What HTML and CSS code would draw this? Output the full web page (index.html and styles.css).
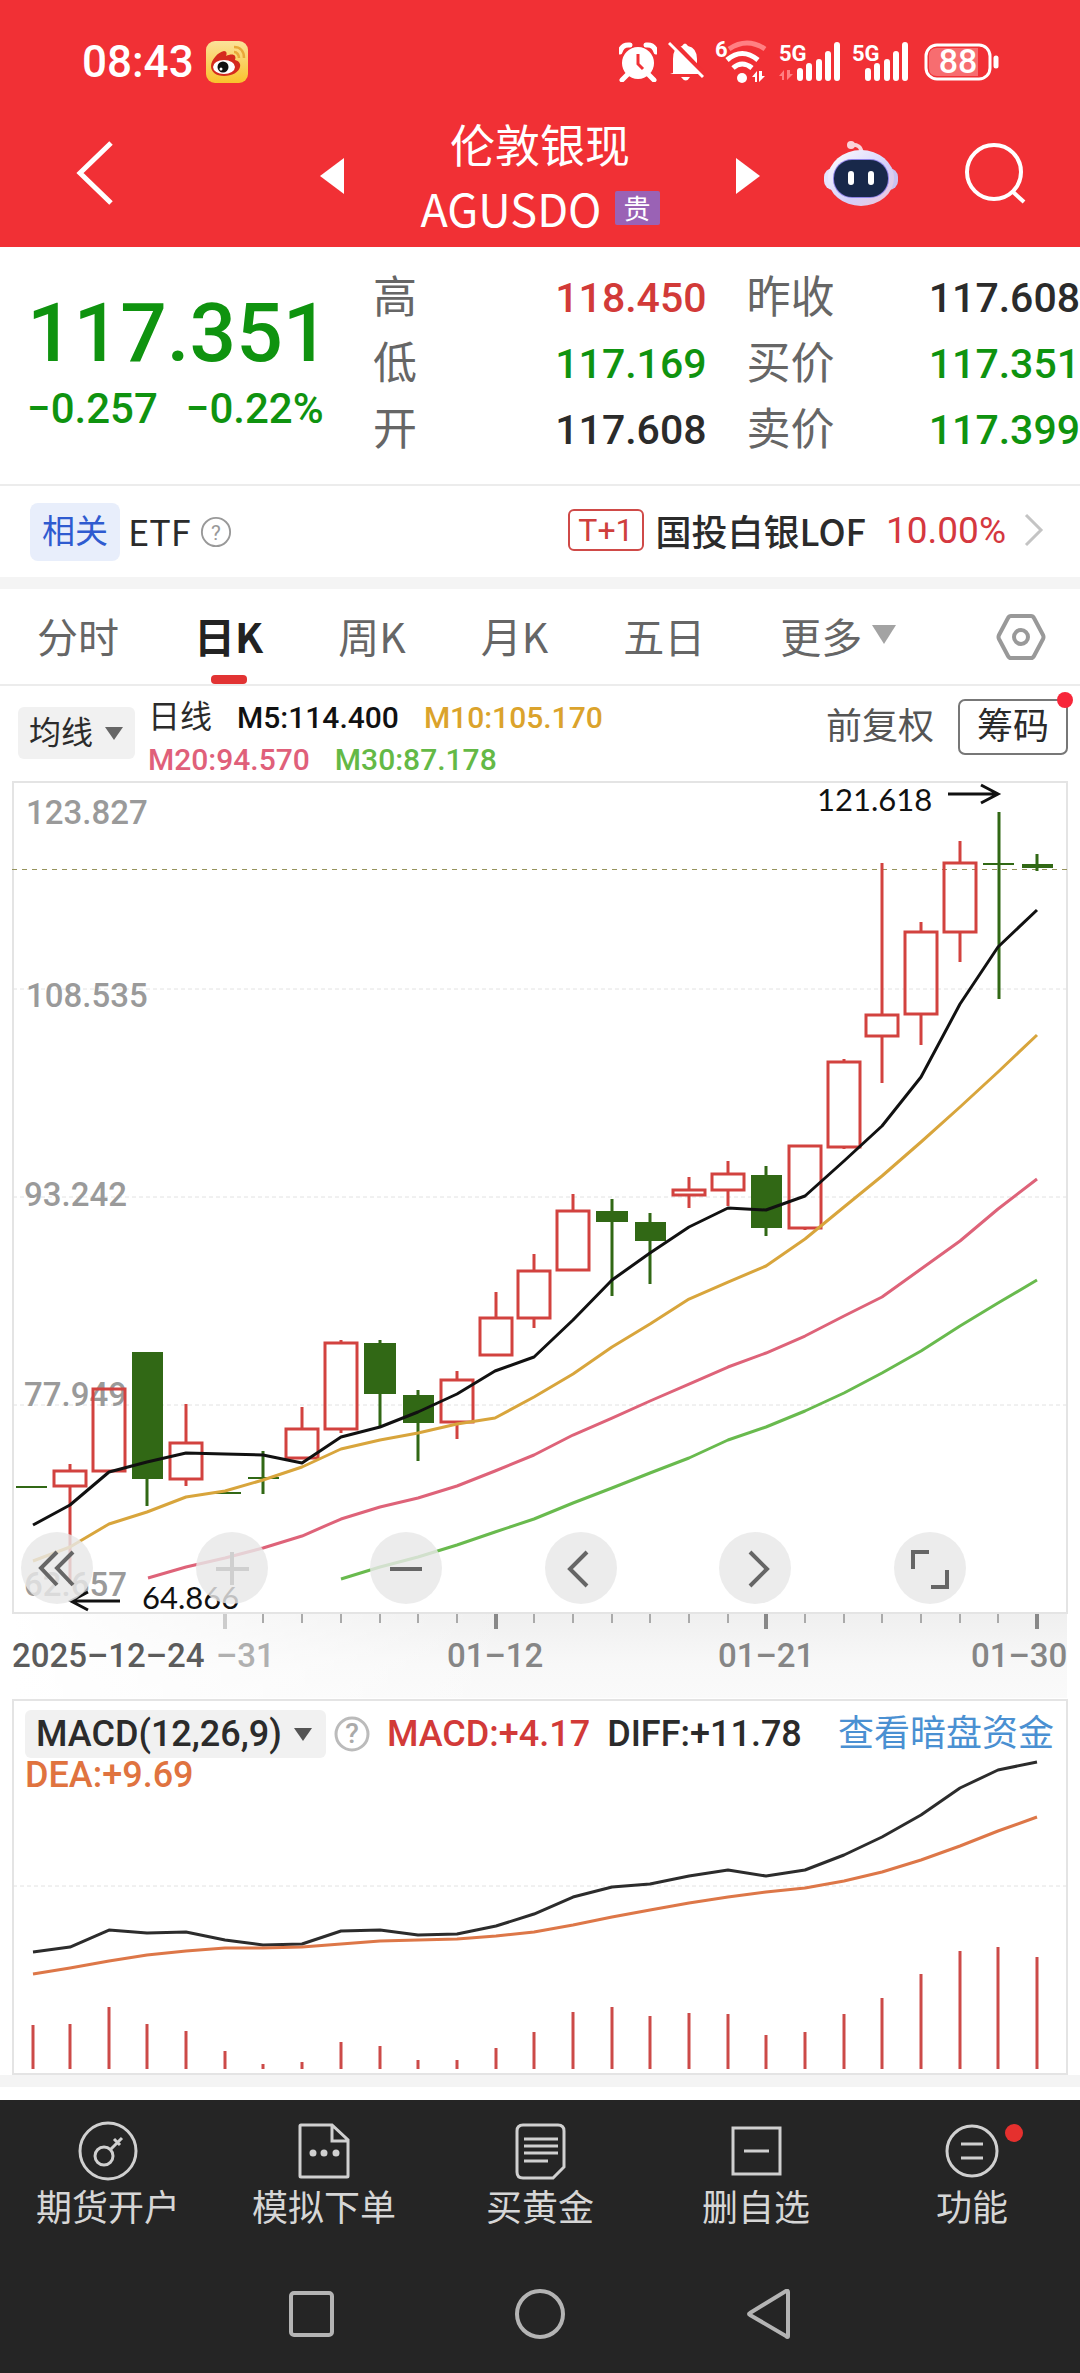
FILE: index.html
```html
<!DOCTYPE html>
<html lang="zh-CN">
<head>
<meta charset="utf-8">
<meta name="viewport" content="width=device-width, initial-scale=1">
<title>伦敦银现 AGUSDO</title>
<link rel="stylesheet" href="styles.css">
</head>
<body>
<header class="header">
  <div class="status">
    <span class="status-time">08:43</span>
    <svg class="status-app" width="42" height="42" viewBox="0 0 42 42" aria-hidden="true">
      <defs><linearGradient id="gold" x1="0" y1="0" x2="0" y2="1"><stop offset="0" stop-color="#fbe29a"/><stop offset="1" stop-color="#f9c22c"/></linearGradient></defs>
      <rect width="42" height="42" rx="9" fill="url(#gold)"/>
      <path d="M5 25C5 19 12 11 18 10c3 0 3 3 2 5 4-2 8-2 9 0 1 2 0 3 0 4 4 1 6 4 5 7-1 5-8 9-16 9S5 31 5 25z" fill="#d52a1e"/>
      <ellipse cx="18" cy="26" rx="11" ry="7" fill="#fff"/>
      <circle cx="17" cy="26" r="5.500" fill="#111"/><circle cx="15" cy="28" r="1.500" fill="#fff"/>
      <path d="M28 11c3 0 5 3 5 6M28 6c6 0 10 4 10 11" fill="none" stroke="#e9a83a" stroke-width="2.500"/>
    </svg>
    <div class="status-icons">
      <svg width="38" height="40" viewBox="0 0 38 40" aria-hidden="true">
        <circle cx="19" cy="21" r="16" fill="#fff"/>
        <path d="M1 10Q3 2 11 3M27 3q8-1 10 7M8 33l-5 5M30 33l5 5" stroke="#fff" stroke-width="5" fill="none" stroke-linecap="round"/>
        <path d="M19 12v10l5 5" stroke="#f13035" stroke-width="3" fill="none"/>
      </svg>
      <svg width="36" height="42" viewBox="0 0 36 42" aria-hidden="true">
        <path d="M5 32V18Q5 6 14 5q3-5 6 0 9 2 9 13v9l4 6H2z" fill="#fff"/>
        <path d="M13 36h9q-4 7-9 0z" fill="#fff"/>
        <path d="M4 0l33 34" stroke="#f13035" stroke-width="5"/><path d="M1 2l34 34" stroke="#fff" stroke-width="3"/>
      </svg>
      <svg class="wifi" width="53" height="42" viewBox="0 0 53 42" aria-hidden="true">
        <text x="0" y="16" class="svg-net">6</text>
        <path d="M14 8q18-12 36 0" fill="none" stroke="#ff8083" stroke-width="5"/>
        <path d="M12 19q15-13 31 0M18 27q9-8 19 0" fill="none" stroke="#fff" stroke-width="5"/>
        <circle cx="27" cy="37" r="5" fill="#fff"/>
        <path d="M37 36l5-6v11h-2v-5zM44 30v11l6-6h-3v-5z" fill="#fff"/>
      </svg>
      <svg width="62" height="40" viewBox="0 0 62 40" aria-hidden="true">
        <text x="0" y="19" class="svg-net">5G</text>
        <path d="M0 34l5-6v10h-2v-4zM8 28v10l6-6h-3v-4z" fill="#ff8083"/>
        <path d="M21 29v7M30 24v12M40 20v16M49 12v24M58 3v33" stroke="#fff" stroke-width="6" stroke-linecap="round"/>
      </svg>
      <svg width="57" height="40" viewBox="0 0 57 40" aria-hidden="true">
        <text x="0" y="19" class="svg-net">5G</text>
        <path d="M16 29v7M25 24v12M35 20v16M44 12v24M53 3v33" stroke="#fff" stroke-width="6" stroke-linecap="round"/>
      </svg>
      <svg class="battery" width="76" height="38" viewBox="0 0 76 38" aria-hidden="true">
        <rect x="2" y="2" width="64" height="34" rx="11" fill="#f13035" stroke="#fff" stroke-width="3"/>
        <path d="M13 5H54v28H13q-8 0-8-8V13q0-8 8-8z" fill="#f76d70"/>
        <path d="M72 15v8" stroke="#fff" stroke-width="5" stroke-linecap="round"/>
        <text x="34" y="30" class="svg-batt">88</text>
      </svg>
    </div>
  </div>
  <div class="titlebar">
    <button class="icon-btn back" aria-label="返回"><svg width="40" height="64" viewBox="0 0 40 64"><path d="M36 2L5 32l31 30" fill="none" stroke="#fff" stroke-width="5"/></svg></button>
    <div class="switcher">
      <button class="icon-btn" aria-label="上一个"><svg width="24" height="36" viewBox="0 0 24 36"><path d="M24 0v36L0 18z" fill="#fff"/></svg></button>
      <div class="title">
        <h1 class="title-name">伦敦银现</h1>
        <p class="title-code">AGUSDO<span class="metal-tag">贵</span></p>
      </div>
      <button class="icon-btn" aria-label="下一个"><svg width="24" height="36" viewBox="0 0 24 36"><path d="M0 0v36l24-18z" fill="#fff"/></svg></button>
    </div>
    <div class="actions">
      <button class="icon-btn" aria-label="智能助手">
        <svg width="74" height="68" viewBox="0 0 74 68">
          <defs><linearGradient id="shell" x1="0" y1="0" x2="1" y2="1"><stop offset="0" stop-color="#fff"/><stop offset=".6" stop-color="#d3cffa"/><stop offset="1" stop-color="#f3c6d6"/></linearGradient></defs>
          <path d="M26 5q11-2 12 9" fill="none" stroke="#fbd3da" stroke-width="4"/><circle cx="27" cy="5" r="4" fill="#fbd3da"/>
          <rect x="0" y="28" width="20" height="22" rx="9" fill="#e6e4fd"/><rect x="54" y="28" width="20" height="22" rx="9" fill="#c9c2f2"/>
          <ellipse cx="37" cy="38" rx="33" ry="28" fill="url(#shell)"/>
          <rect x="9" y="19" width="56" height="39" rx="19" fill="#8f83e8"/>
          <rect x="10" y="20" width="54" height="37" rx="18" fill="#18284a"/>
          <path d="M27 34v8M47 34v8" stroke="#fff" stroke-width="6" stroke-linecap="round"/>
        </svg>
      </button>
      <button class="icon-btn" aria-label="搜索"><svg width="61" height="61" viewBox="0 0 61 61"><circle cx="29" cy="29" r="27" fill="none" stroke="#fff" stroke-width="4"/><path d="M47 48l12 11" stroke="#fff" stroke-width="4"/></svg></button>
    </div>
  </div>
</header>

<main>
  <section class="quote">
    <div class="price down">
      <strong class="price-last">117.351</strong>
      <p class="price-change"><span>−0.257</span><span>−0.22%</span></p>
    </div>
    <dl class="stats">
      <div class="stat"><dt>高</dt><dd class="up">118.450</dd></div>
      <div class="stat"><dt>低</dt><dd class="down">117.169</dd></div>
      <div class="stat"><dt>开</dt><dd>117.608</dd></div>
    </dl>
    <dl class="stats">
      <div class="stat"><dt>昨收</dt><dd>117.608</dd></div>
      <div class="stat"><dt>买价</dt><dd class="down">117.351</dd></div>
      <div class="stat"><dt>卖价</dt><dd class="down">117.399</dd></div>
    </dl>
  </section>

  <section class="related">
    <span class="related-tag">相关</span>
    <span class="related-kind">ETF</span>
    <svg width="32" height="32" viewBox="0 0 34 34" aria-hidden="true"><circle cx="17" cy="17" r="15" fill="none" stroke="#999" stroke-width="2"/><text x="17" y="25" class="svg-help">?</text></svg>
    <a class="fund" href="#fund">
      <span class="fund-tag">T+1</span>
      <span>国投白银LOF</span>
      <span class="fund-rate">10.00%</span>
      <svg width="20" height="34" viewBox="0 0 20 34" aria-hidden="true"><path d="M2 2l15 15L2 32" fill="none" stroke="#c4c4c4" stroke-width="3"/></svg>
    </a>
  </section>

  <nav class="tabs">
    <button class="tab">分时</button>
    <button class="tab tab-on">日K</button>
    <button class="tab">周K</button>
    <button class="tab">月K</button>
    <button class="tab">五日</button>
    <button class="tab">更多<svg width="24" height="19" viewBox="0 0 24 19" aria-hidden="true"><path d="M0 0h24L12 19z" fill="#a3a3a3"/></svg></button>
    <button class="icon-btn settings" aria-label="设置"><svg width="50" height="48" viewBox="0 0 50 48"><path d="M15 3h20q2 0 3 2l9 17q1 2 0 4l-9 17q-1 2-3 2H15q-2 0-3-2L3 26q-1-2 0-4l9-17q1-2 3-2z" fill="none" stroke="#999" stroke-width="4"/><circle cx="25" cy="24" r="7" fill="none" stroke="#999" stroke-width="4"/></svg></button>
  </nav>

  <section class="averages">
    <button class="pick ma-pick">均线<svg width="18" height="13" viewBox="0 0 18 13" aria-hidden="true"><path d="M0 0h18L9 13z" fill="#666"/></svg></button>
    <p class="ma-list">
      <span class="ma-cycle">日线</span><span class="ma5">M5:114.400</span><span class="ma10">M10:105.170</span><br>
      <span class="ma20">M20:94.570</span><span class="ma30">M30:87.178</span>
    </p>
    <button class="adjust">前复权</button>
    <button class="chips">筹码<i class="chips-dot"></i></button>
  </section>

  <section class="kchart">
    <svg class="plot" viewBox="0 781 1080 918" role="img" aria-label="日K线图">
      <defs>
        <linearGradient id="axisbg" x1="0" y1="0" x2="0" y2="1"><stop offset="0" stop-color="#efefef"/><stop offset=".6" stop-color="#f8f8f8"/><stop offset="1" stop-color="#fafafa"/></linearGradient>
        <linearGradient id="axisfade" x1="0" y1="0" x2="1" y2="0"><stop offset="0" stop-color="#fff"/><stop offset="1" stop-color="#fff" stop-opacity="0"/></linearGradient>
      </defs>
      <rect x="13" y="1613" width="1054" height="85" fill="url(#axisbg)"/>
      <rect x="13" y="1613" width="500" height="85" fill="url(#axisfade)"/>
      <rect x="13" y="782" width="1054" height="831" class="frame"/>
      <path d="M13 989H1067M13 1197H1067M13 1405H1067" class="grid"/>
      <path d="M12 869H1067" class="last-line"/>
      <g class="scale">
        <text x="26" y="824">123.827</text><text x="26" y="1007">108.535</text><text x="24" y="1206">93.242</text><text x="24" y="1406">77.949</text><text x="24" y="1596">62.657</text>
      </g>
      <g class="k-up">
        <path d="M70 1464v7M70 1486v98M186 1404v39M186 1479v7M302 1407v22M341 1340v3M341 1429v4M457 1371v9M457 1422v17M496 1292v26M534 1254v17M534 1318v10M573 1194v17M689 1177v13M689 1195v13M728 1161v13M728 1190v16M805 1228v2M844 1059v3M844 1147v2M882 863v152M882 1036v47M921 922v10M921 1014v31M960 841v22M960 932v30"/>
        <rect x="54" y="1471" width="32" height="15"/><rect x="93" y="1389" width="32" height="82"/><rect x="170" y="1443" width="32" height="36"/><rect x="286" y="1429" width="32" height="29"/><rect x="325" y="1343" width="32" height="86"/><rect x="441" y="1380" width="32" height="42"/><rect x="480" y="1318" width="32" height="37"/><rect x="518" y="1271" width="32" height="47"/><rect x="557" y="1211" width="32" height="59"/><rect x="673" y="1190" width="32" height="5"/><rect x="712" y="1174" width="32" height="16"/><rect x="789" y="1146" width="32" height="82"/><rect x="828" y="1062" width="32" height="85"/><rect x="866" y="1015" width="32" height="21"/><rect x="905" y="932" width="32" height="82"/><rect x="944" y="863" width="32" height="69"/>
      </g>
      <g class="k-down">
        <path d="M147 1479v27M263 1451v43M380 1340v88M418 1390v71M612 1199v97M650 1213v71M766 1166v70M999 812v187M1037 854v17"/>
        <path class="k-flat" d="M16 1487h31M209 1493h32M248 1478h31M983 864h31"/>
        <path class="k-fill" d="M132 1352h31v127h-31zM364 1343h32v51h-32zM403 1395h31v28h-31zM596 1211h32v11h-32zM635 1222h31v19h-31zM751 1175h31v53h-31zM1022 864h31v4h-31z"/>
      </g>
      <polyline class="line ma5-line" points="33,1525 70,1505 109,1472 147,1462 186,1453 225,1454 263,1455 302,1463 341,1437 380,1427 418,1412 457,1394 495,1371 534,1357 573,1320 612,1280 650,1253 689,1227 728,1208 766,1210 805,1196 844,1161 882,1126 921,1077 960,1004 998,947 1037,910"/>
      <polyline class="line ma10-line" points="33,1561 70,1547 109,1524 147,1512 186,1497 225,1491 263,1480 302,1467 341,1449 380,1440 418,1433 457,1424 495,1418 534,1397 573,1374 612,1347 650,1324 689,1299 728,1282 766,1266 805,1239 844,1207 882,1176 921,1142 960,1107 998,1072 1037,1035"/>
      <polyline class="line ma20-line" points="148,1578 186,1567 225,1558 263,1548 302,1536 341,1519 380,1507 418,1498 457,1486 495,1471 534,1455 573,1435 612,1418 650,1401 689,1384 728,1367 766,1353 805,1336 844,1316 882,1297 921,1269 960,1241 998,1209 1037,1179"/>
      <polyline class="line ma30-line" points="341,1579 380,1567 418,1557 457,1545 495,1532 534,1519 573,1503 612,1488 650,1473 689,1458 728,1440 766,1427 805,1411 844,1393 882,1373 921,1351 960,1326 998,1303 1037,1280"/>
      <text x="817" y="811" class="extreme">121.618</text><path d="M948 794h50M981 785l17 9-17 9" class="arrow"/>
      <text x="142" y="1609" class="extreme">64.866</text><path d="M120 1601H71M88 1592l-17 9 17 9" class="arrow"/>
      <path class="tick" d="M263 1614v9M302 1614v9M341 1614v9M380 1614v9M418 1614v9M457 1614v9M534 1614v9M573 1614v9M612 1614v9M650 1614v9M689 1614v9M728 1614v9M805 1614v9M844 1614v9M882 1614v9M921 1614v9M960 1614v9M998 1614v9"/>
      <path class="tick-major" d="M496 1614v15M766 1614v15M1037 1614v15"/><path class="tick-faint" d="M225 1614v15"/>
      <g class="dates"><text x="12" y="1667" class="date-first">2025–12–24</text><text x="216" y="1667" class="date-faint">–31</text><text x="447" y="1667">01–12</text><text x="718" y="1667">01–21</text><text x="971" y="1667">01–30</text></g>
    </svg>
    <div class="controls">
      <button class="round" aria-label="收起"><svg viewBox="0 0 72 72"><path d="M36 20L20 36l16 17M52 20L36 36l16 17"/></svg></button>
      <button class="round round-off" aria-label="放大"><svg viewBox="0 0 72 72"><path d="M20 37h33M36 20v33"/></svg></button>
      <button class="round" aria-label="缩小"><svg viewBox="0 0 72 72"><path d="M20 37h32"/></svg></button>
      <button class="round" aria-label="左移"><svg viewBox="0 0 72 72"><path d="M42 20L25 37l17 17"/></svg></button>
      <button class="round" aria-label="右移"><svg viewBox="0 0 72 72"><path d="M31 20l17 17-17 17"/></svg></button>
      <button class="round" aria-label="全屏"><svg viewBox="0 0 72 72"><path d="M19 37V20h16M53 38v17H37"/></svg></button>
    </div>
  </section>

  <section class="macd">
    <svg class="plot" viewBox="0 1699 1080 376" role="img" aria-label="MACD 指标图">
      <rect x="13" y="1700" width="1054" height="374" class="frame"/>
      <path d="M13 1886H1067" class="grid"/>
      <path class="bars" d="M33 2025V2069M70 2024V2069M109 2007V2069M147 2024V2069M186 2031V2069M225 2051V2069M263 2064V2069M302 2062V2069M341 2042V2069M380 2046V2069M418 2060V2069M457 2060V2069M496 2048V2069M534 2032V2069M573 2012V2069M612 2007V2069M650 2016V2069M689 2013V2069M728 2014V2069M766 2035V2069M805 2032V2069M844 2014V2069M882 1998V2069M921 1974V2069M960 1951V2069M998 1947V2069M1037 1957V2069"/>
      <polyline class="line diff-line" points="33,1952 70,1947 109,1930 147,1933 186,1932 225,1940 263,1945 302,1944 341,1931 380,1930 418,1935 457,1934 496,1926 534,1914 573,1897 612,1887 650,1884 689,1876 728,1870 766,1876 805,1870 844,1855 882,1837 921,1815 960,1788 998,1770 1037,1762"/>
      <polyline class="line dea-line" points="33,1974 70,1968 109,1961 147,1955 186,1951 225,1948 263,1948 302,1947 341,1944 380,1941 418,1940 457,1939 496,1936 534,1932 573,1925 612,1917 650,1910 689,1903 728,1897 766,1892 805,1888 844,1881 882,1872 921,1860 960,1846 998,1831 1037,1817"/>
    </svg>
    <div class="macd-head">
      <div class="macd-row">
        <button class="pick macd-pick">MACD(12,26,9)<svg width="18" height="13" viewBox="0 0 18 13" aria-hidden="true"><path d="M0 0h18L9 13z" fill="#555"/></svg></button>
        <svg class="macd-help" width="36" height="36" viewBox="0 0 36 36" aria-hidden="true"><circle cx="18" cy="18" r="16" fill="none" stroke="#bbb" stroke-width="3"/><text x="18" y="27" class="svg-help svg-help-lg">?</text></svg>
        <span class="up">MACD:+4.17</span>
        <span class="diff">DIFF:+11.78</span>
        <a class="dark-pool" href="#dark-pool">查看暗盘资金</a>
      </div>
      <div class="dea">DEA:+9.69</div>
    </div>
  </section>
</main>

<footer class="footer">
  <nav class="dock">
    <a class="dock-item" href="#open"><svg width="60" height="60" viewBox="0 0 60 60"><circle cx="30" cy="30" r="28"/><circle cx="26" cy="35" r="9"/><path d="M33 28l11-11M36 18l6 6"/></svg>期货开户</a>
    <a class="dock-item" href="#demo"><svg width="60" height="60" viewBox="0 0 60 60"><path d="M38 4H7q-1 0-1 1v50q0 1 1 1h46q1 0 1-1V19zM38 4v16h16"/><path class="dots" d="M19 32h0M30 32h0M42 32h0"/></svg>模拟下单</a>
    <a class="dock-item" href="#gold"><svg width="60" height="60" viewBox="0 0 60 60"><path d="M13 4h35q6 0 6 6v36L43 57H13q-6 0-6-6V10q0-6 6-6zM14 18h34M14 25h34M14 32h34M14 40h24"/></svg>买黄金</a>
    <a class="dock-item" href="#remove"><svg width="60" height="60" viewBox="0 0 60 60"><path d="M7 7h47v46H7zM18 30h25"/></svg>删自选</a>
    <a class="dock-item" href="#more"><svg width="60" height="60" viewBox="0 0 60 60"><circle cx="30" cy="30" r="25"/><path d="M19 23h22M19 37h22"/></svg>功能<i class="dock-dot"></i></a>
  </nav>
  <div class="system">
    <button class="icon-btn" aria-label="最近任务"><svg width="50" height="50" viewBox="0 0 50 50"><rect x="5" y="4" width="41" height="42" rx="3"/></svg></button>
    <button class="icon-btn" aria-label="主屏幕"><svg width="50" height="50" viewBox="0 0 50 50"><circle cx="25" cy="25" r="23"/></svg></button>
    <button class="icon-btn" aria-label="系统返回"><svg width="50" height="50" viewBox="0 0 50 50"><path d="M44 3v44q0 2-2 0L6 26q-2-1 0-2L42 2q2-1 2 1z"/></svg></button>
  </div>
</footer>
</body>
</html>
```

FILE: styles.css
```css
* { box-sizing: border-box; }
body {
  margin: 0;
  min-height: 100vh;
  display: flex;
  flex-direction: column;
  background: #fff;
  color: #2b2b2b;
  font-family: Roboto, "Noto Sans CJK SC", sans-serif;
  font-size: 36px;
}
h1, p, dl, dd { margin: 0; }
button { border: 0; padding: 0; background: none; color: inherit; font: inherit; }
a { color: inherit; text-decoration: none; }
svg { display: block; flex: none; }
.up { color: #d23a38; }
.down { color: #0f930f; }
.icon-btn { display: block; }

/* header */
.header { background: #f13035; color: #fff; }
.status { display: flex; align-items: center; padding: 36px 80px 16px 82px; height: 104px; }
.status-time { font-size: 44px; font-weight: 500; }
.status-app { margin-left: 12px; }
.status-icons { display: flex; align-items: center; gap: 11px; margin-left: auto; }
.wifi { overflow: visible; }
.battery { margin-left: 4px; }
.svg-net { font-size: 22px; font-weight: 700; fill: #fff; }
.svg-batt { font-size: 34px; font-weight: 500; fill: #fff; text-anchor: middle; }
.titlebar { display: grid; grid-template-columns: 1fr 440px 1fr; align-items: center; height: 143px; }
.back { justify-self: start; margin: 0 0 6px 75px; }
.switcher { display: flex; align-items: center; justify-content: space-between; }
.title { text-align: center; font-family: "Noto Sans CJK SC", sans-serif; }
.title-name { font-size: 45px; font-weight: 400; line-height: 64px; }
.title-code { display: flex; align-items: center; gap: 13px; font-size: 45px; line-height: 64px; }
.metal-tag { padding: 0 9px; border-radius: 2px; background: #9a62b5; font-size: 27px; line-height: 34px; }
.actions { display: flex; align-items: center; justify-content: flex-end; gap: 67px; margin: 0 54px 4px 0; }

/* quote */
.quote { display: grid; grid-template-columns: 333px 1fr 1fr; gap: 40px; min-height: 239px; border-bottom: 2px solid #ececec; }
.price { padding: 36px 0 0 27px; white-space: nowrap; }
.price-last { display: block; font-size: 82px; font-weight: 500; line-height: 100px; }
.price-change { display: flex; gap: 28px; font-size: 42px; font-weight: 500; line-height: 52px; }
.stats { padding-top: 18px; }
.stat { display: flex; justify-content: space-between; line-height: 66px; }
.stat dt { color: #666; font-size: 44px; }
.stat dd { font-size: 41px; font-weight: 500; }

/* related fund */
.related { display: flex; align-items: center; height: 103px; padding: 0 36px 0 30px; border-bottom: 12px solid #f4f4f4; }
.related-tag { margin-right: 8px; padding: 0 12px; border-radius: 8px; background: #e8eefb; color: #2f5bd0; font-size: 33px; line-height: 58px; }
.related-kind { margin-right: 9px; padding-bottom: 3px; font-family: "Noto Sans CJK SC", sans-serif; }
.svg-help { font-size: 22px; fill: #999; text-anchor: middle; }
.svg-help-lg { font-size: 28px; fill: #aaa; }
.fund { display: flex; align-items: center; margin-left: auto; padding-bottom: 3px; font-family: "Noto Sans CJK SC", sans-serif; font-weight: 500; }
.fund-tag { margin-right: 12px; padding: 0 8px; border: 2px solid #cf4a48; border-radius: 6px; color: #cf3f3d; font: 32px/38px Roboto, sans-serif; }
.fund-rate { margin: 0 18px 0 20px; color: #d5383f; font-family: Roboto, sans-serif; font-size: 37px; font-weight: 400; }

/* period tabs */
.tabs { display: flex; align-items: stretch; gap: 75px; height: 97px; padding: 0 34px 0 37px; border-bottom: 2px solid #ececec; color: #666; font-family: "Noto Sans CJK SC", sans-serif; font-size: 41px; }
.tab { position: relative; display: flex; align-items: center; gap: 10px; padding-bottom: 4px; white-space: nowrap; }
.tab-on { color: #222; font-weight: 700; }
.tab-on::after { content: ""; position: absolute; bottom: 0; left: 50%; width: 36px; height: 9px; margin-left: -18px; border-radius: 4px; background: #e23333; }
.settings { align-self: center; margin-left: auto; }

/* moving averages */
.averages { display: flex; align-items: flex-start; height: 95px; padding: 12px 12px 0 18px; }
.pick { display: flex; align-items: center; gap: 12px; border-radius: 6px; background: #f1f1f1; white-space: nowrap; }
.ma-pick { margin: 9px 13px 0 0; padding: 0 12px 0 11px; font-size: 32px; line-height: 52px; }
.ma-list { margin-top: -2px; font-size: 30px; line-height: 42px; white-space: nowrap; font-weight: 500; }
.ma-list span { margin-right: 25px; }
.ma-list .ma-cycle { font-size: 32px; font-weight: 400; }
.ma5 { color: #111; }
.ma10 { color: #dba32c; }
.ma20 { color: #e0607a; }
.ma30 { color: #64b946; }
.adjust { margin: 1px 0 0 auto; color: #555; font-size: 36px; line-height: 56px; }
.chips { position: relative; margin: 1px 0 0 24px; padding: 0 17px; border: 2px solid #777; border-radius: 7px; font-size: 36px; line-height: 52px; }
.chips-dot { position: absolute; top: -9px; right: -7px; width: 16px; height: 16px; border-radius: 50%; background: #f7263a; }

/* charts */
.kchart, .macd { position: relative; }
.plot { width: 100%; height: auto; }
.frame { fill: none; stroke: #e4e4e4; stroke-width: 2; }
.grid { fill: none; stroke: #e2e2e2; stroke-width: 1; stroke-dasharray: 4 3; }
.last-line { stroke: #96935c; stroke-width: 1; stroke-dasharray: 5 5; shape-rendering: crispEdges; }
.scale { font-size: 33px; font-weight: 500; fill: #9a9a9a; }
.k-up { fill: none; stroke: #d2423f; stroke-width: 3; }
.k-down { fill: none; stroke: #316815; stroke-width: 3; }
.k-down .k-flat { stroke-width: 2; }
.k-down .k-fill { fill: #316815; stroke: none; }
.line { fill: none; stroke-width: 3; stroke-linejoin: round; }
.ma5-line { stroke: #111; }
.ma10-line { stroke: #d8a53c; }
.ma20-line { stroke: #de6379; }
.ma30-line { stroke: #69ba4e; }
.extreme { font-family: Lato, sans-serif; font-size: 31px; fill: #111; }
.arrow { fill: none; stroke: #111; stroke-width: 3; }
.tick { stroke: #aaa; stroke-width: 2; }
.tick-major { stroke: #888; stroke-width: 4; }
.tick-faint { stroke: #ccc; stroke-width: 4; }
.dates { font-size: 33px; font-weight: 500; fill: #868686; }
.date-first { fill: #5c5c5c; }
.date-faint { fill: #b0b0b0; }
.controls { position: absolute; right: 0; bottom: 95px; left: 0; display: flex; justify-content: space-between; padding: 0 114px 0 21px; }
.round { width: 72px; height: 72px; border-radius: 50%; background: rgba(232, 232, 232, .82); }
.round svg { width: 100%; fill: none; stroke: #666; stroke-width: 4; }
.round-off svg { stroke: #cfcfcf; }

/* MACD */
.macd { border-bottom: 12px solid #f4f4f4; }
.macd-head { position: absolute; top: 11px; right: 26px; left: 25px; }
.macd-row { display: flex; align-items: center; line-height: 48px; white-space: nowrap; font-weight: 500; }
.macd-pick { padding: 0 14px 0 11px; }
.macd-help { margin: 0 17px 0 8px; }
.diff { margin-left: 17px; }
.dark-pool { margin-left: auto; color: #4a90d2; font-weight: 400; }
.dea { color: #e0733f; font-weight: 500; line-height: 34px; }
.bars { stroke: #cc4a48; stroke-width: 3; }
.diff-line { stroke: #2c2c2c; }
.dea-line { stroke: #dd7748; }

/* footer */
.footer { flex: 1; margin-top: 13px; background: #252525; color: #d6d6d6; }
.dock { display: grid; grid-template-columns: repeat(5, 1fr); padding-top: 21px; }
.dock-item { position: relative; display: flex; flex-direction: column; align-items: center; gap: 2px; font-size: 36px; line-height: 52px; }
.dock-item svg { fill: none; stroke: #d0d0d0; stroke-width: 3; }
.dock-item .dots { stroke-width: 7; stroke-linecap: round; }
.dock-dot { position: absolute; top: 3px; left: 50%; width: 18px; height: 18px; margin-left: 33px; border-radius: 50%; background: #e5302e; }
.system { display: flex; justify-content: center; gap: 179px; padding: 54px 0 32px; }
.system svg { fill: none; stroke: #b4b4b4; stroke-width: 4; }
```
